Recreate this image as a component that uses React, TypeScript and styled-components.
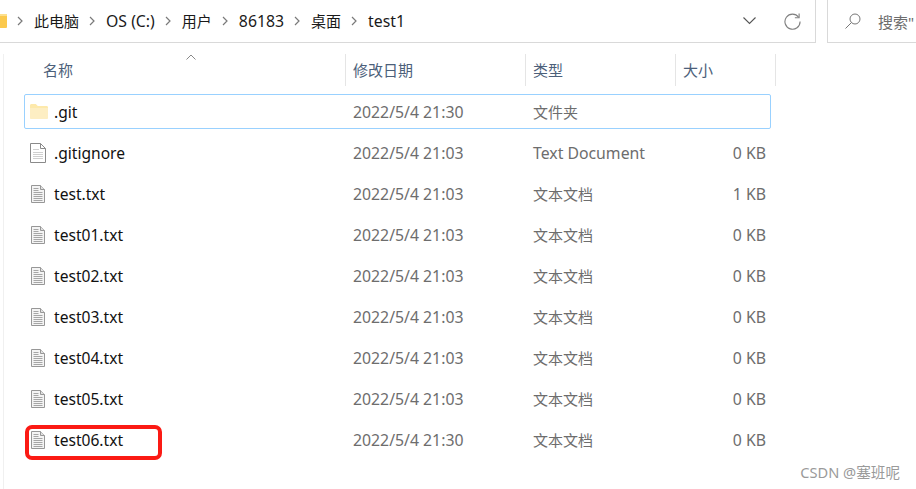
import React from "react";
import styled, { createGlobalStyle } from "styled-components";

const Global = createGlobalStyle`
  html, body { margin: 0; padding: 0; background: #fff; }
  body { width: 916px; height: 489px; overflow: hidden; font-family: "Noto Sans", "Noto Sans CJK SC", sans-serif; }
`;
const Page = styled.div`
  position: relative; width: 916px; height: 489px; overflow: hidden; background: #fff;
  font-family: "Noto Sans", "Noto Sans CJK SC", sans-serif;
`;
const TopBar = styled.header`
  display: flex; height: 43px; gap: 11px; overflow: hidden;
`;
const Address = styled.div`
  width: 816px; flex: none; box-sizing: border-box; height: 43px;
  border: 1px solid #d9d9d9; border-width: 0 1px 1px 0;
  display: flex; align-items: center;
`;
const Crumbs = styled.nav`
  display: flex; align-items: center; flex: 1; margin-left: -9px;
`;
const Crumb = styled.span<{ $latin: boolean }>`
  display: flex; align-items: center; font-size: ${(p) => (p.$latin ? "15.8px" : "15px")}; color: #1a1a1a; line-height: 20px;
`;
const Chevron = styled.svg`
  width: 6px; height: 10px; margin: 0 11px 0 10px; flex: none;
`;
const AddressTools = styled.div`
  display: flex; align-items: center; gap: 28px; padding-right: 14px;
`;
const SearchBox = styled.div`
  flex: 1; height: 43px; box-sizing: border-box; border: 1px solid #d9d9d9; border-width: 0 0 1px 1px;
  display: flex; align-items: center; padding-left: 17px; gap: 17px; white-space: nowrap;
  font-size: 15px; color: #6d6d6d;
`;
const Main = styled.main`
  margin: 11px 0 0 3px; border-left: 1px solid #f0f0f0; height: 435px; box-sizing: border-box; padding-left: 20px;
`;
const Header = styled.div`
  position: relative; display: grid; grid-template-columns: 322px 180px 150px 100px; height: 32px; width: 752px; margin-bottom: 8px;
`;
const HeadCell = styled.div<{ $pad: number }>`
  display: flex; align-items: center; padding: 0 0 2px ${(p) => p.$pad}px; box-sizing: border-box;
  font-size: 15px; color: #4c607a; border-right: 1px solid #e5e5e5;
`;
const SortCaret = styled.svg`
  position: absolute; left: 162px; top: 0; width: 10px; height: 6px;
`;
const Row = styled.div<{ $selected?: boolean }>`
  display: grid; grid-template-columns: 29px 299px 180px 150px 1fr; align-items: center;
  box-sizing: border-box; width: 747px; height: 35px; margin-bottom: 6px; padding-right: 4px;
  border: 1px solid ${(p) => (p.$selected ? "#99d1ff" : "transparent")}; border-radius: 2px;
`;
const IconCell = styled.div<{ $pad: number }>`
  display: flex; padding-left: ${(p) => p.$pad}px; align-items: center;
`;
const Name = styled.div`color: #111; font-size: 15.6px; white-space: nowrap;`;
const Meta = styled.div<{ $cjk?: boolean }>`color: #6d6d6d; font-size: ${(p) => (p.$cjk ? "15px" : "15.8px")}; white-space: nowrap;`;
const Size = styled(Meta)`text-align: right;`;
const Highlight = styled.div`
  position: absolute; left: 25px; top: 425px; width: 137px; height: 35px; box-sizing: border-box;
  border: 4px solid #fb1a14; border-radius: 7px;
`;
const Mark = styled.div`
  position: absolute; right: 16px; top: 463px; font-size: 14.6px; line-height: 18px; color: #9a9a9a; white-space: nowrap;
`;

const FolderIcon = () => (
  <svg width="18" height="15" viewBox="0 0 18 15">
    <path d="M0 1.5C0 .7.6 0 1.4 0h4.4l2 2h8.8c.8 0 1.4.6 1.4 1.4v10.2c0 .8-.6 1.4-1.4 1.4H1.4C.6 15 0 14.4 0 13.6z" fill="#fde9ab" />
    <path d="M0 4h18v9.6c0 .8-.6 1.4-1.4 1.4H1.4C.6 15 0 14.4 0 13.6z" fill="#fdeec3" />
  </svg>
);
const TinyFolder = () => (
  <svg width="16" height="14" viewBox="0 0 16 14" style={{ flex: "none" }}>
    <rect width="16" height="14" rx="1" fill="#fbc94d" />
    <rect width="16" height="2" fill="#fde08d" />
  </svg>
);
const BlankDoc = () => (
  <svg width="16" height="20" viewBox="0 0 16 20">
    <path d="M.5.5h10l5 5v14H.5z" fill="#fff" stroke="#8a8a8a" />
    <path d="M10.5.5v5h5" fill="none" stroke="#8a8a8a" />
    <path d="M3 6.5h6M3 9.5h10M3 11.5h10M3 13.5h10M3 15.5h10" stroke="#d0d0d0" />
  </svg>
);
const TextDoc = () => (
  <svg width="14" height="18" viewBox="0 0 14 18">
    <path d="M.5.5h9l4 4v13H.5z" fill="#f4f4f4" stroke="#979797" />
    <path d="M9.5.5v4h4" fill="#e0e0e0" stroke="#979797" />
    <path d="M2.5 3.5h5M2.5 5.5h5M2.5 7.5h9M2.5 9.5h9M2.5 11.5h9M2.5 13.5h9M2.5 15.5h9" stroke="#a6a6a6" />
  </svg>
);

const crumbs = ["此电脑", "OS (C:)", "用户", "86183", "桌面", "test1"];
const rows = [
  { name: ".git", time: "21:30", type: "文件夹", size: "", icon: "folder" },
  { name: ".gitignore", time: "21:03", type: "Text Document", size: "0 KB", icon: "blank" },
  { name: "test.txt", time: "21:03", type: "文本文档", size: "1 KB", icon: "text" },
  { name: "test01.txt", time: "21:03", type: "文本文档", size: "0 KB", icon: "text" },
  { name: "test02.txt", time: "21:03", type: "文本文档", size: "0 KB", icon: "text" },
  { name: "test03.txt", time: "21:03", type: "文本文档", size: "0 KB", icon: "text" },
  { name: "test04.txt", time: "21:03", type: "文本文档", size: "0 KB", icon: "text" },
  { name: "test05.txt", time: "21:03", type: "文本文档", size: "0 KB", icon: "text" },
  { name: "test06.txt", time: "21:30", type: "文本文档", size: "0 KB", icon: "text" },
];

export default function App() {
  return (
    <Page>
      <Global />
      <TopBar>
        <Address>
          <Crumbs>
            <TinyFolder />
            {crumbs.map((label) => (
              <Crumb key={label} $latin={/^[A-Za-z0-9]/.test(label)}>
                <Chevron viewBox="0 0 6 10">
                  <path d="M1 1l4 4-4 4" fill="none" stroke="#7a7a7a" strokeWidth="1.2" />
                </Chevron>
                {label}
              </Crumb>
            ))}
          </Crumbs>
          <AddressTools>
            <svg width="13" height="8" viewBox="0 0 13 8"><path d="M.5.5l6 6 6-6" fill="none" stroke="#555" strokeWidth="1.1" /></svg>
            <svg width="17" height="17" viewBox="0 0 18 18"><path d="M15.5 4.5A8 8 0 1 0 17 9" fill="none" stroke="#808080" strokeWidth="1.2" /><path d="M16 .5v4.5h-4.5" fill="none" stroke="#808080" strokeWidth="1.2" /></svg>
          </AddressTools>
        </Address>
        <SearchBox>
          <svg width="16" height="16" viewBox="0 0 16 16"><circle cx="10" cy="6" r="5" fill="none" stroke="#777" /><path d="M6.5 9.5L.5 15.5" stroke="#777" /></svg>
          <span>搜索"</span>
        </SearchBox>
      </TopBar>
      <Main>
        <Header>
          <SortCaret viewBox="0 0 10 6"><path d="M.5 5.5L5 1l4.5 4.5" fill="none" stroke="#888" /></SortCaret>
          <HeadCell $pad={19}>名称</HeadCell>
          <HeadCell $pad={7}>修改日期</HeadCell>
          <HeadCell $pad={7}>类型</HeadCell>
          <HeadCell $pad={7}>大小</HeadCell>
        </Header>
        {rows.map((r, i) => (
          <Row key={r.name} $selected={i === 0}>
            <IconCell $pad={r.icon === "text" ? 6 : 5}>
              {r.icon === "folder" ? <FolderIcon /> : r.icon === "blank" ? <BlankDoc /> : <TextDoc />}
            </IconCell>
            <Name>{r.name}</Name>
            <Meta>2022/5/4 {r.time}</Meta>
            <Meta $cjk={r.type !== "Text Document"}>{r.type}</Meta>
            <Size>{r.size}</Size>
          </Row>
        ))}
      </Main>
      <Highlight />
      <Mark>CSDN @塞班呢</Mark>
    </Page>
  );
}
